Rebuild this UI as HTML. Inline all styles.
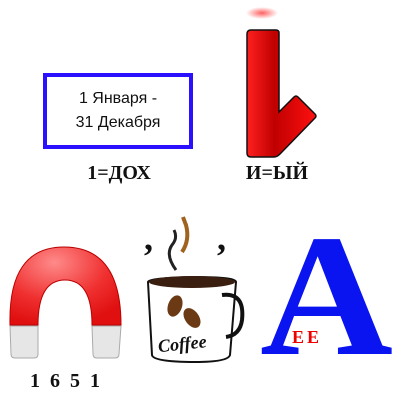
<!DOCTYPE html>
<html><head><meta charset="utf-8"><style>
body{margin:0;width:400px;height:401px;background:#fff;position:relative;overflow:hidden}
.a{position:absolute}
.box{left:43px;top:73px;width:142px;border:4px solid #2a10ff;font-family:"Liberation Sans",sans-serif;font-size:16px;line-height:24px;text-align:center;padding-top:10px;height:58px;color:#111}
.lab{font-family:"Liberation Serif",serif;font-weight:bold;font-size:20px;color:#111}
</style></head><body>
<div class="a box">1 Января -<br>31 Декабря</div>
<div class="a lab" style="left:74px;top:162px;width:90px;text-align:center">1=ДОХ</div>
<div class="a lab" style="left:232px;top:162px;width:90px;text-align:center">И=ЫЙ</div>
<div class="a lab" style="left:30px;top:370px;letter-spacing:2.5px">1 6 5 1</div>
<svg class="a" style="left:0;top:0" width="400" height="401" viewBox="0 0 400 401">
<defs>
<linearGradient id="rg" x1="0" y1="0" x2="1" y2="0"><stop offset="0" stop-color="#ff2020"/><stop offset=".4" stop-color="#c00000"/><stop offset="1" stop-color="#ff1010"/></linearGradient>
<radialGradient id="mg" cx=".4" cy=".2" r=".8"><stop offset="0" stop-color="#ff8a8a"/><stop offset=".6" stop-color="#f03030"/><stop offset="1" stop-color="#e01010"/></radialGradient>
<radialGradient id="bl" cx=".5" cy=".5" r=".5"><stop offset="0" stop-color="#ff6060"/><stop offset="1" stop-color="#ff6060" stop-opacity="0"/></radialGradient>
</defs>
<ellipse cx="262" cy="13" rx="16" ry="6" fill="url(#bl)"/>
<path d="M251 30 H276 Q279 30 279 33 V112 L294 97 Q296 95 298 97 L315 114 Q317 116 315 118 L280 154 Q277 157 274 157 H251 Q247 157 247 153 V34 Q247 30 251 30 Z" fill="url(#rg)" stroke="#111" stroke-width="1.5"/>
<path d="M10 325 Q8 247 64 247 Q121 247 121 325 L92 325 Q92 280 65 280 Q38 280 38 325 Z" fill="url(#mg)" stroke="#b00" stroke-width="1"/>
<path d="M10 326 H38 V354 Q38 358 34 358 H15 Q11 358 11 354 Z" fill="#e6e6e6" stroke="#aaa"/>
<path d="M92 326 H121 L119 354 Q119 358 115 358 H97 Q93 358 93 354 Z" fill="#e6e6e6" stroke="#aaa"/>
<path d="M148 282 Q148 278 195 277 Q236 277 236 282 L230 355 Q228 362 195 362 Q153 362 152 355 Z" fill="#fff" stroke="#111" stroke-width="2"/>
<ellipse cx="192" cy="282" rx="43" ry="6" fill="#3a1f10"/>
<path d="M222 295 Q245 292 242 320 Q240 335 226 337" fill="none" stroke="#111" stroke-width="4"/>
<ellipse cx="175" cy="306" rx="7" ry="11" fill="#6b3a14" transform="rotate(20 175 306)"/>
<ellipse cx="192" cy="318" rx="7" ry="11" fill="#6b3a14" transform="rotate(-35 192 318)"/>
<text x="158" y="350" font-family="Liberation Serif,serif" font-style="italic" font-weight="bold" font-size="18" fill="#111" transform="rotate(-6 180 345)">Coffee</text>
<path d="M176 270 Q165 255 172 245 Q178 238 174 230" fill="none" stroke="#222" stroke-width="3"/>
<path d="M182 252 Q190 240 186 225 Q184 220 183 217" fill="none" stroke="#a0621f" stroke-width="4"/>
<text x="144" y="250" font-family="Liberation Serif,serif" font-weight="bold" font-size="36" fill="#111">,</text>
<text x="217" y="250" font-family="Liberation Serif,serif" font-weight="bold" font-size="36" fill="#111">,</text>
<text x="260" y="354" font-family="Liberation Serif,serif" font-weight="bold" font-size="174" fill="#0a14f0" textLength="133" lengthAdjust="spacingAndGlyphs">A</text>
<text x="292" y="343" font-family="Liberation Serif,serif" font-weight="bold" font-size="18" fill="#e00" letter-spacing="3">EE</text>
</svg>
</body></html>
